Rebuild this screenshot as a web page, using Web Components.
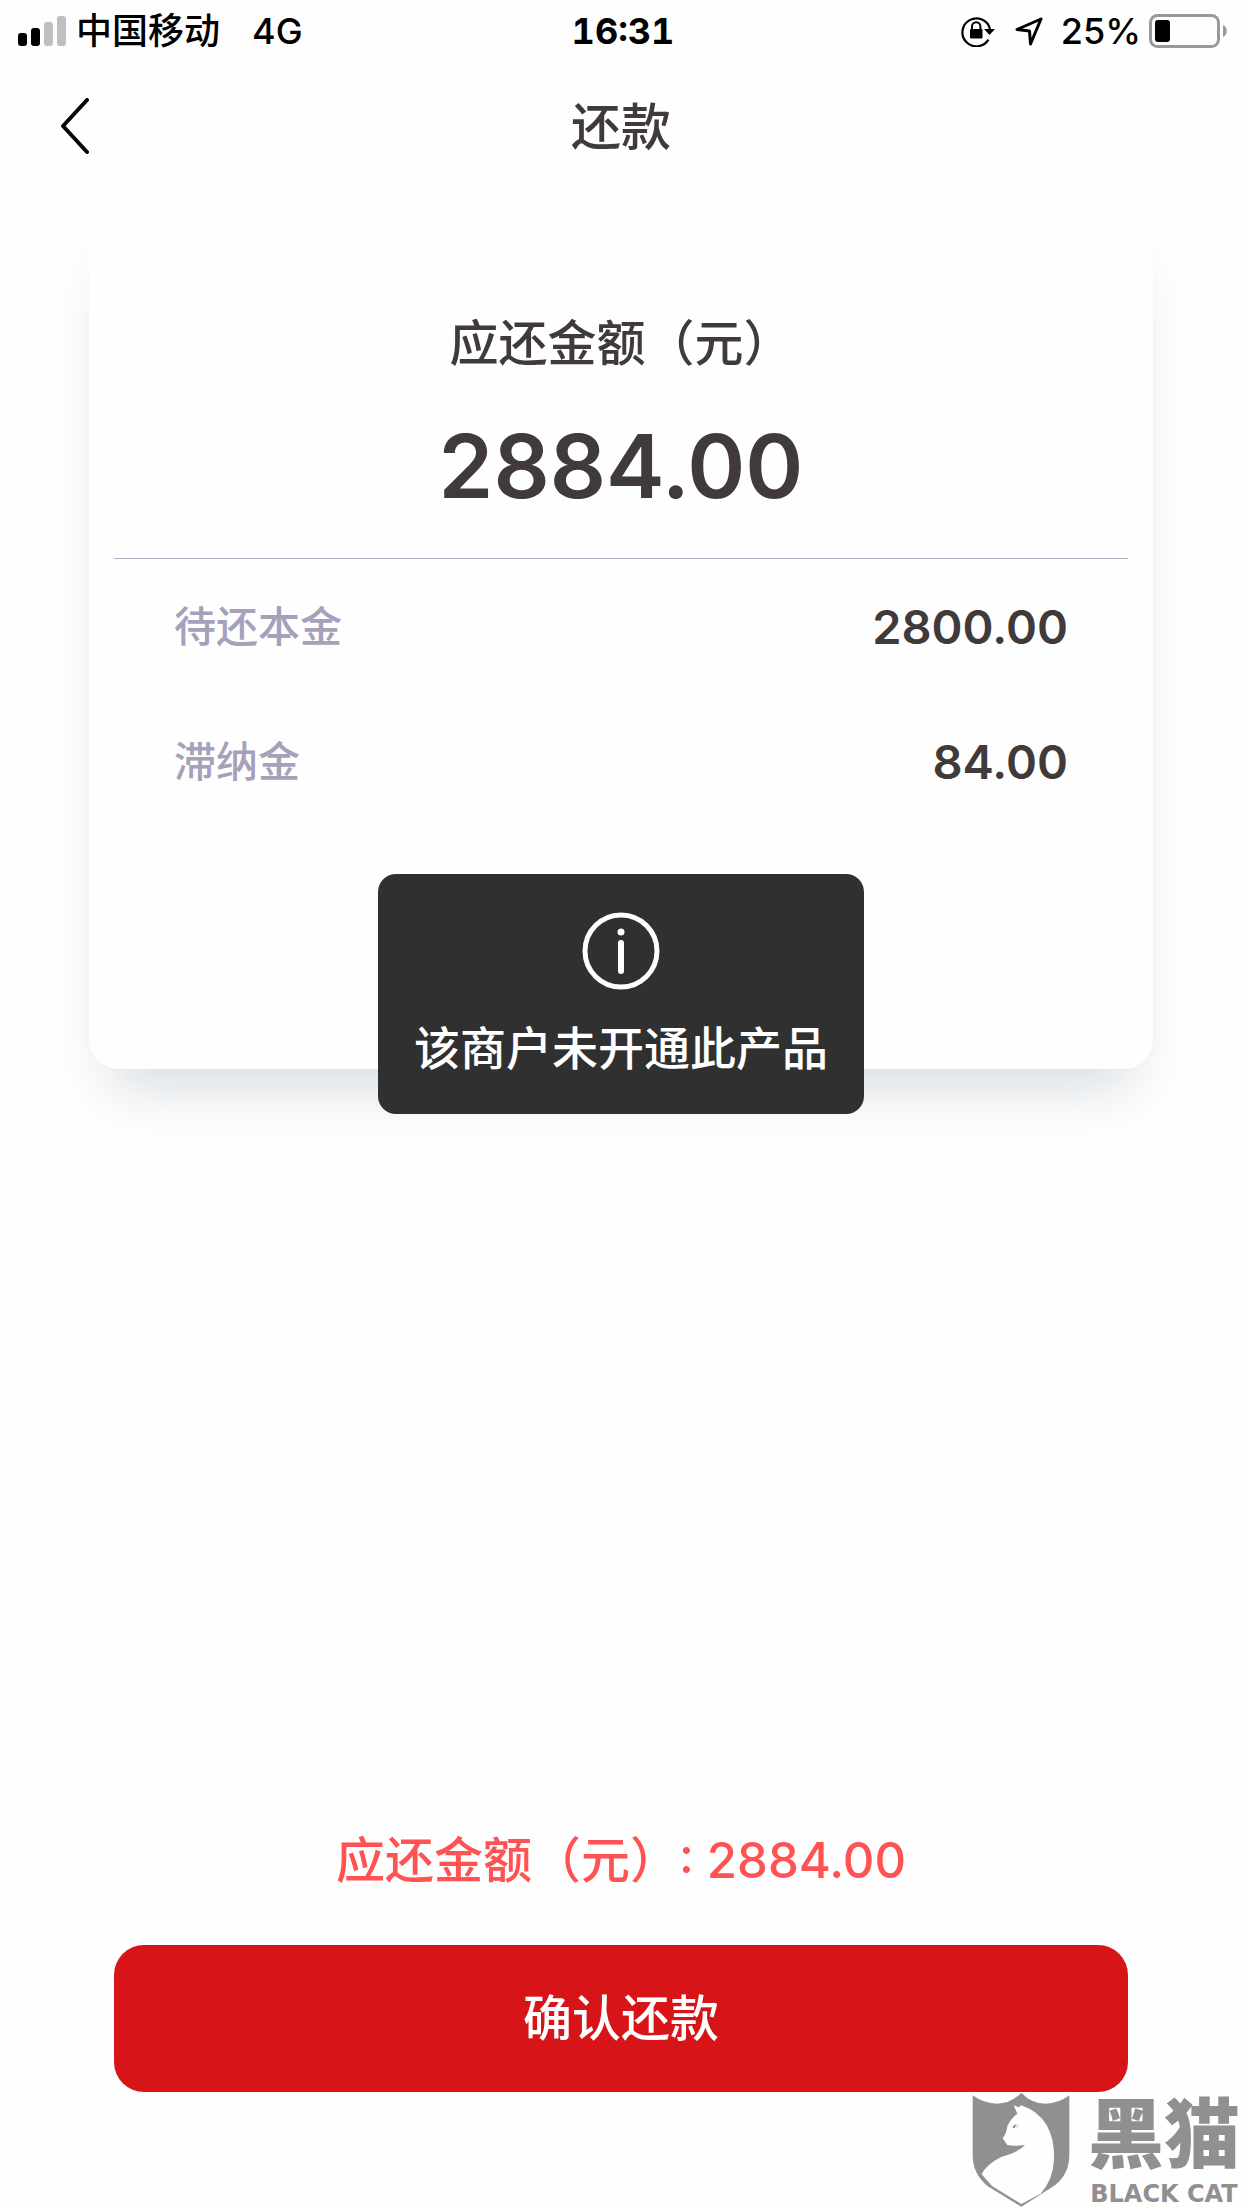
<!DOCTYPE html>
<html lang="zh-CN">
<head>
<meta charset="UTF-8">
<meta name="viewport" content="width=device-width, initial-scale=1">
<title>还款</title>
<style>
    body {
        margin: 0;
        background: #fefefe;
        color: #403a3a;
        font-family: Inter, "Noto Sans CJK SC", sans-serif;
        font-weight: 500;
    }
</style>
</head>
<body>
<repay-page>
    <status-bar slot="top" carrier="中国移动" network="4G" time="16:31" battery="25"></status-bar>
    <nav-header slot="top">还款</nav-header>
    <amount-card label="应还金额（元）" total="2884.00">
        <amount-row label="待还本金">2800.00</amount-row>
        <amount-row label="滞纳金">84.00</amount-row>
    </amount-card>
    <pay-footer slot="bottom" action="确认还款">应还金额（元）: 2884.00</pay-footer>
    <toast-message slot="overlay">该商户未开通此产品</toast-message>
    <cat-watermark slot="overlay"></cat-watermark>
</repay-page>

<script>
class RepayPage extends HTMLElement {
    constructor() {
        super();
        this.attachShadow({ mode: 'open' }).innerHTML = `
            <style>
                :host {
                    display: flex;
                    flex-direction: column;
                    min-height: 100vh;
                    position: relative;
                    overflow: hidden;
                }

                main {
                    flex: 1;
                    padding: 18px 89px;
                }
            </style>
            <slot name="top"></slot>
            <main><slot></slot></main>
            <slot name="bottom"></slot>
            <slot name="overlay"></slot>
        `;
    }
}

class StatusBar extends HTMLElement {
    constructor() {
        super();
        this.attachShadow({ mode: 'open' });
    }

    connectedCallback() {
        const level = parseInt(this.getAttribute('battery'));
        this.shadowRoot.innerHTML = `
            <style>
                :host {
                    display: grid;
                    grid-template-columns: 1fr auto 1fr;
                    align-items: center;
                    height: 62px;
                    padding: 0 14px 0 18px;
                    color: #000;
                    font-size: 36px;
                    line-height: 62px;
                }

                .side {
                    display: flex;
                    align-items: center;
                }

                .right {
                    justify-content: flex-end;
                }

                .network {
                    margin-left: 32px;
                }

                .time {
                    font-weight: 700;
                    font-variant-numeric: tabular-nums;
                }

                .signal {
                    margin-right: 10px;
                }

                .location {
                    margin: 0 18px 0 20px;
                }

                .battery {
                    margin-left: 8px;
                }

                svg {
                    display: block;
                }
            </style>
            <div class="side">
                <svg class="signal" width="48" height="32" viewBox="0 0 48 32">
                    <rect y="18" width="9" height="13" rx="3"/>
                    <rect x="13" y="13" width="9" height="18" rx="3"/>
                    <rect x="26" y="7" width="9" height="24" rx="3" fill="#bfbfbf"/>
                    <rect x="39" y="1" width="9" height="30" rx="3" fill="#bfbfbf"/>
                </svg>
                <span>${this.getAttribute('carrier')}</span>
                <span class="network">${this.getAttribute('network')}</span>
            </div>
            <span class="time">${this.getAttribute('time')}</span>
            <div class="side right">
                <!-- Rotation lock -->
                <svg width="34" height="32" viewBox="0 0 34 32">
                    <path d="M27.4 24.6A14 14 0 1 1 29 14" fill="none" stroke="#000" stroke-width="2.2"/>
                    <path d="M23 14h11l-5.5 6z"/>
                    <rect x="9" y="14" width="12.5" height="9.5" rx="1"/>
                    <path d="M11 15v-3.5a4.2 4.2 0 0 1 8.4 0V15" fill="none" stroke="#000" stroke-width="2"/>
                </svg>
                <svg class="location" width="28" height="30" viewBox="0 0 28 30">
                    <path d="M26 3 2 13.5l12.5 1.500L15.500 28z" fill="none" stroke="#000" stroke-width="3" stroke-linejoin="round"/>
                </svg>
                <span>${level}%</span>
                <svg class="battery" width="79" height="34" viewBox="0 0 79 34">
                    <rect x="1.5" y="1.5" width="68" height="31" rx="7" fill="none" stroke="#999" stroke-width="3"/>
                    <rect x="6" y="6" width="${level * 0.6}" height="22" rx="3"/>
                    <path d="M74 11c5 2 5 10 0 12z" fill="#999"/>
                </svg>
            </div>
        `;
    }
}

class NavHeader extends HTMLElement {
    constructor() {
        super();
        this.attachShadow({ mode: 'open' }).innerHTML = `
            <style>
                :host {
                    display: grid;
                    grid-template-columns: 1fr auto 1fr;
                    align-items: center;
                    height: 130px;
                    padding: 0 47px;
                }

                button {
                    justify-self: start;
                    padding: 8px 12px;
                    border: 0;
                    background: none;
                    cursor: pointer;
                }

                svg {
                    display: block;
                }

                h1 {
                    margin: 0;
                    font-size: 50px;
                    font-weight: 500;
                    line-height: 72px;
                }
            </style>
            <button type="button" aria-label="返回">
                <svg width="32" height="58" viewBox="0 0 32 58">
                    <path d="M28 2 4 28l24 26" fill="none" stroke="#05050a" stroke-width="4" stroke-linecap="round" stroke-linejoin="round"/>
                </svg>
            </button>
            <h1><slot></slot></h1>
        `;
    }
}

class AmountCard extends HTMLElement {
    constructor() {
        super();
        this.attachShadow({ mode: 'open' });
    }

    connectedCallback() {
        this.shadowRoot.innerHTML = `
            <style>
                :host {
                    display: block;
                    padding: 98px 25px 240px;
                    border-radius: 30px;
                    background: #fefefe;
                    box-shadow: 0 38px 60px -22px #d4dadf;
                }

                .summary {
                    padding-bottom: 38px;
                    border-bottom: 1px solid #aab6c5;
                    text-align: center;
                }

                h2, p {
                    margin: 0;
                    font-weight: 500;
                }

                h2 {
                    font-size: 49px;
                    line-height: 72px;
                }

                p {
                    margin-top: 32px;
                    font-size: 88px;
                    font-weight: 600;
                    line-height: 108px;
                }
            </style>
            <div class="summary">
                <h2>${this.getAttribute('label')}</h2>
                <p>${this.getAttribute('total')}</p>
            </div>
            <slot></slot>
        `;
    }
}

class AmountRow extends HTMLElement {
    constructor() {
        super();
        this.attachShadow({ mode: 'open' });
    }

    connectedCallback() {
        this.shadowRoot.innerHTML = `
            <style>
                :host {
                    display: flex;
                    align-items: center;
                    justify-content: space-between;
                    height: 135px;
                    padding: 0 60px;
                    font-size: 47px;
                    font-weight: 600;
                    line-height: 60px;
                }

                .label {
                    color: #a5a1bb;
                    font-size: 42px;
                    font-weight: 500;
                }
            </style>
            <span class="label">${this.getAttribute('label')}</span>
            <span><slot></slot></span>
        `;
    }
}

class PayFooter extends HTMLElement {
    constructor() {
        super();
        this.attachShadow({ mode: 'open' });
    }

    connectedCallback() {
        this.shadowRoot.innerHTML = `
            <style>
                :host {
                    display: block;
                    padding: 0 114px 116px;
                    text-align: center;
                    font-size: 49px;
                    line-height: 72px;
                }

                p {
                    margin: 0 0 48px;
                    color: #ff5252;
                }

                button {
                    display: block;
                    width: 100%;
                    height: 147px;
                    border: 0;
                    border-radius: 30px;
                    background: #d71518;
                    color: #fff;
                    font: inherit;
                    cursor: pointer;
                }
            </style>
            <p><slot></slot></p>
            <button type="button">${this.getAttribute('action')}</button>
        `;
    }
}

class ToastMessage extends HTMLElement {
    constructor() {
        super();
        this.attachShadow({ mode: 'open' }).innerHTML = `
            <style>
                :host {
                    position: absolute;
                    top: 45%;
                    left: 50%;
                    transform: translate(-50%, -50%);
                    display: flex;
                    flex-direction: column;
                    align-items: center;
                    gap: 22px;
                    padding: 38px 36px 30px;
                    border-radius: 18px;
                    background: #303030;
                    color: #fff;
                    font-size: 46px;
                    line-height: 72px;
                    white-space: nowrap;
                }
            </style>
            <svg width="78" height="78" viewBox="0 0 78 78" fill="none" stroke="#fff">
                <circle cx="39" cy="39" r="36" stroke-width="5"/>
                <path d="M39 31v28" stroke-width="6" stroke-linecap="round"/>
                <circle cx="39" cy="20" r="3.5" fill="#fff" stroke="none"/>
            </svg>
            <span role="status"><slot></slot></span>
        `;
    }
}

class CatWatermark extends HTMLElement {
    constructor() {
        super();
        this.attachShadow({ mode: 'open' }).innerHTML = `
            <style>
                :host {
                    position: absolute;
                    right: 2px;
                    bottom: 0;
                    display: flex;
                    align-items: flex-end;
                    gap: 18px;
                    color: #918f90;
                    pointer-events: none;
                }

                svg {
                    display: block;
                }

                .name {
                    display: flex;
                    flex-direction: column;
                    align-items: center;
                }

                .zh {
                    font-family: "Liberation Sans", "Noto Sans CJK SC", sans-serif;
                    font-size: 76px;
                    font-weight: 900;
                    line-height: 88px;
                }

                .en {
                    font-family: "DejaVu Sans", sans-serif;
                    font-size: 24px;
                    font-weight: 700;
                    line-height: 28px;
                    white-space: nowrap;
                }
            </style>
            <svg width="98" height="116" viewBox="38 68 294 348">
                <path fill="#918f90" d="M40 78q34 25 73 25q42 0 73-33q31 33 73 33q38 0 71-25v180q0 55-43 90L186 412 84 350Q40 313 40 258z"/>
                <path fill="#fefefe" d="M163 108l16 6 6-6q52 17 78 61 23 42 21 100-2 62-40 104l-58 31L98 350 67 315q12-28 58-52 53-14 72-36-34 4-53 0l-14-20q12-16 14-36 10-24 30-38z"/>
                <path fill="#918f90" d="M158 174q5-9 16-10-8 5-7 13zM169 179q6-5 5-13 5 8-5 13z"/>
            </svg>
            <div class="name">
                <span class="zh">黑猫</span>
                <span class="en">BLACK CAT</span>
            </div>
        `;
    }
}

customElements.define('repay-page', RepayPage);
customElements.define('status-bar', StatusBar);
customElements.define('nav-header', NavHeader);
customElements.define('amount-card', AmountCard);
customElements.define('amount-row', AmountRow);
customElements.define('pay-footer', PayFooter);
customElements.define('toast-message', ToastMessage);
customElements.define('cat-watermark', CatWatermark);
</script>
</body>
</html>
